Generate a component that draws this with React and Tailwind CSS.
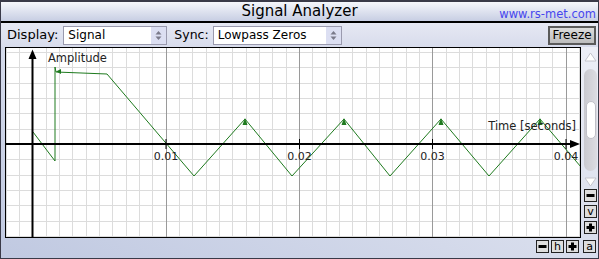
import React from "react";

// plot geometry in page pixels (svg viewBox uses the same coordinates)
const X0 = 32.5;
const DX = 13.333;
const Y0 = 144;
const DY = 15.33;

const signal = [
  [33, 132], [55, 161], [55, 67], [56, 72], [107, 74], [194, 176],
  [245, 119], [292, 176], [344, 119], [390, 176], [441, 119], [489, 176],
  [540, 119], [581, 167],
];

const peaks = [245, 344, 441, 540];
const ticks = [
  { x: 166, label: "0.01" },
  { x: 299.5, label: "0.02" },
  { x: 432.5, label: "0.03" },
  { x: 566, label: "0.04" },
];

const Plot = () => {
  const vLines = [];
  for (let k = -2; k <= 41; k++) {
    const x = Math.round(X0 + k * DX) + 0.5;
    if (k === 0) continue;
    vLines.push(
      <line key={"v" + k} x1={x} y1={48} x2={x} y2={237} stroke={k % 10 === 0 ? "#9a9a9a" : "#dcdcdc"} strokeWidth="1" />
    );
  }
  const hLines = [];
  for (let j = -6; j <= 6; j++) {
    if (j === 0) continue;
    const y = Math.round(Y0 + j * DY) + 0.5;
    hLines.push(<line key={"h" + j} x1={6} y1={y} x2={580} y2={y} stroke="#dcdcdc" strokeWidth="1" />);
  }

  return (
    <svg width="574" height="189" viewBox="6 48 574 189" className="block">
      <rect x="6" y="48" width="574" height="189" fill="#ffffff" />
      <g shapeRendering="crispEdges">
        {hLines}
        {vLines}
      </g>

      {/* signal */}
      <polyline
        points={signal.map((p) => p.join(",")).join(" ")}
        fill="none"
        stroke="#1e7a1e"
        strokeWidth="1"
      />
      {peaks.map((x) => (
        <polygon key={x} points={`${x - 2.5},${125} ${x},${118} ${x + 2.5},${125}`} fill="#1e7a1e" />
      ))}
      <polygon points="56,71.5 61,69 61,74" fill="#1e7a1e" />

      {/* axes */}
      <line x1="6" y1="144" x2="572" y2="144" stroke="#000" strokeWidth="2" />
      <polygon points="570,140 580,144 570,148" fill="#000" />
      <line x1="32.5" y1="237" x2="32.5" y2="58" stroke="#000" strokeWidth="2" />
      <polygon points="28.5,59 32.5,49.5 36.5,59" fill="#000" />
      {ticks.map((t) => (
        <line key={t.x} x1={t.x} y1="139" x2={t.x} y2="149" stroke="#000" strokeWidth="1" />
      ))}

      <g fontFamily="'DejaVu Sans', sans-serif" fill="#222">
        <text x="48" y="61.5" fontSize="11.5">Amplitude</text>
        <text x="576" y="130" fontSize="11.5" textAnchor="end">Time [seconds]</text>
        {ticks.map((t) => (
          <text key={t.label} x={t.x} y="159.5" fontSize="11" textAnchor="middle">{t.label}</text>
        ))}
      </g>
    </svg>
  );
};

const Arrows = () => (
  <svg width="7" height="11" viewBox="0 0 7 11">
    <polygon points="0.5,4.5 3.5,1 6.5,4.5" fill="#7a7a8a" />
    <polygon points="0.5,6.5 3.5,10 6.5,6.5" fill="#7a7a8a" />
  </svg>
);

const Select = ({ value, width }) => (
  <div className={`flex h-[19px] border border-[#9a9aae] bg-white ${width}`}>
    <span className="flex-1 pl-[4px] text-[12px] leading-[17px] text-black">{value}</span>
    <span className="flex w-[15px] items-center justify-center bg-[#dcdff2]">
      <Arrows />
    </span>
  </div>
);

const SmallButton = ({ children }) => (
  <div className="flex h-[13px] w-[13px] items-center justify-center border border-[#222] bg-[#dedede] text-[11px] leading-none text-black">
    {children}
  </div>
);

const Minus = () => (
  <svg width="9" height="9" viewBox="0 0 9 9">
    <rect x="0.5" y="3" width="8" height="3" fill="#000" />
  </svg>
);

const Plus = () => (
  <svg width="9" height="9" viewBox="0 0 9 9">
    <rect x="0.5" y="3" width="8" height="3" fill="#000" />
    <rect x="3" y="0.5" width="3" height="8" fill="#000" />
  </svg>
);

const Scrollbar = () => (
  <div className="flex w-[15px] flex-col items-center">
    <svg width="13" height="10" viewBox="0 0 13 10" className="mt-[5px]">
      <polygon points="1,9 6.5,1 12,9" fill="#ffffff" stroke="#c4c4cc" strokeWidth="1" />
    </svg>
    <div className="mt-[7px] flex h-[102px] w-[13px] flex-col items-center rounded-full bg-gradient-to-r from-[#c9c9cf] to-[#dcdce2] pt-[32px]">
      <div className="h-[38px] w-[10px] rounded-full border border-[#c0c0c8] bg-white" />
    </div>
    <svg width="13" height="10" viewBox="0 0 13 10" className="mt-[6px]">
      <polygon points="1,1 6.5,9 12,1" fill="#ffffff" stroke="#c4c4cc" strokeWidth="1" />
    </svg>
    <div className="mt-[2px] flex flex-col gap-[3px]">
      <SmallButton><Minus /></SmallButton>
      <SmallButton>v</SmallButton>
      <SmallButton><Plus /></SmallButton>
    </div>
  </div>
);

export default function App() {
  return (
    <div className="flex h-[259px] w-[599px] flex-col border-x border-b border-t-2 border-x-[#3a3a48] border-b-[#3a3a48] border-t-[#3a3a48] bg-gradient-to-tr from-[#c0c9e1] to-[#f1f2f8] font-['DejaVu_Sans',sans-serif]">
      {/* title bar */}
      <div className="relative flex h-[21px] shrink-0 items-center justify-center border-b-2 border-black bg-gradient-to-b from-[#f6f7fb] to-[#c7cee3]">
        <span className="text-[15px] leading-none text-black">Signal Analyzer</span>
        <span className="absolute right-[2px] bottom-[1px] text-[11.5px] leading-none text-[#4646ee]">www.rs-met.com</span>
      </div>

      {/* toolbar */}
      <div className="flex h-[24px] shrink-0 items-center bg-gradient-to-b from-[#e6e8f3] to-[#d8dcec] pl-[6px] pr-[2px]">
        <span className="mr-[5px] text-[13px] text-black">Display:</span>
        <Select value="Signal" width="w-[104px]" />
        <span className="ml-[7px] mr-[4px] text-[12.5px] text-black">Sync:</span>
        <Select value="Lowpass Zeros" width="w-[129px]" />
        <div className="ml-auto flex h-[19px] w-[48px] items-center justify-center border-2 border-[#5a5a5a] bg-gradient-to-b from-[#dcdcdc] to-[#bdbdbd] text-[12px] leading-none text-black">
          Freeze
        </div>
      </div>

      {/* plot and vertical controls */}
      <div className="flex h-[191px] shrink-0 pl-[4px]">
        <div className="h-[191px] w-[576px] border border-black bg-white">
          <Plot />
        </div>
        <div className="ml-[2px]">
          <Scrollbar />
        </div>
      </div>

      {/* horizontal zoom controls */}
      <div className="flex flex-1 items-start justify-end gap-[2px] pt-[2px] pr-[2px]">
        <SmallButton><Minus /></SmallButton>
        <SmallButton>h</SmallButton>
        <SmallButton><Plus /></SmallButton>
        <div className="ml-[2px]">
          <SmallButton>a</SmallButton>
        </div>
      </div>
    </div>
  );
}
